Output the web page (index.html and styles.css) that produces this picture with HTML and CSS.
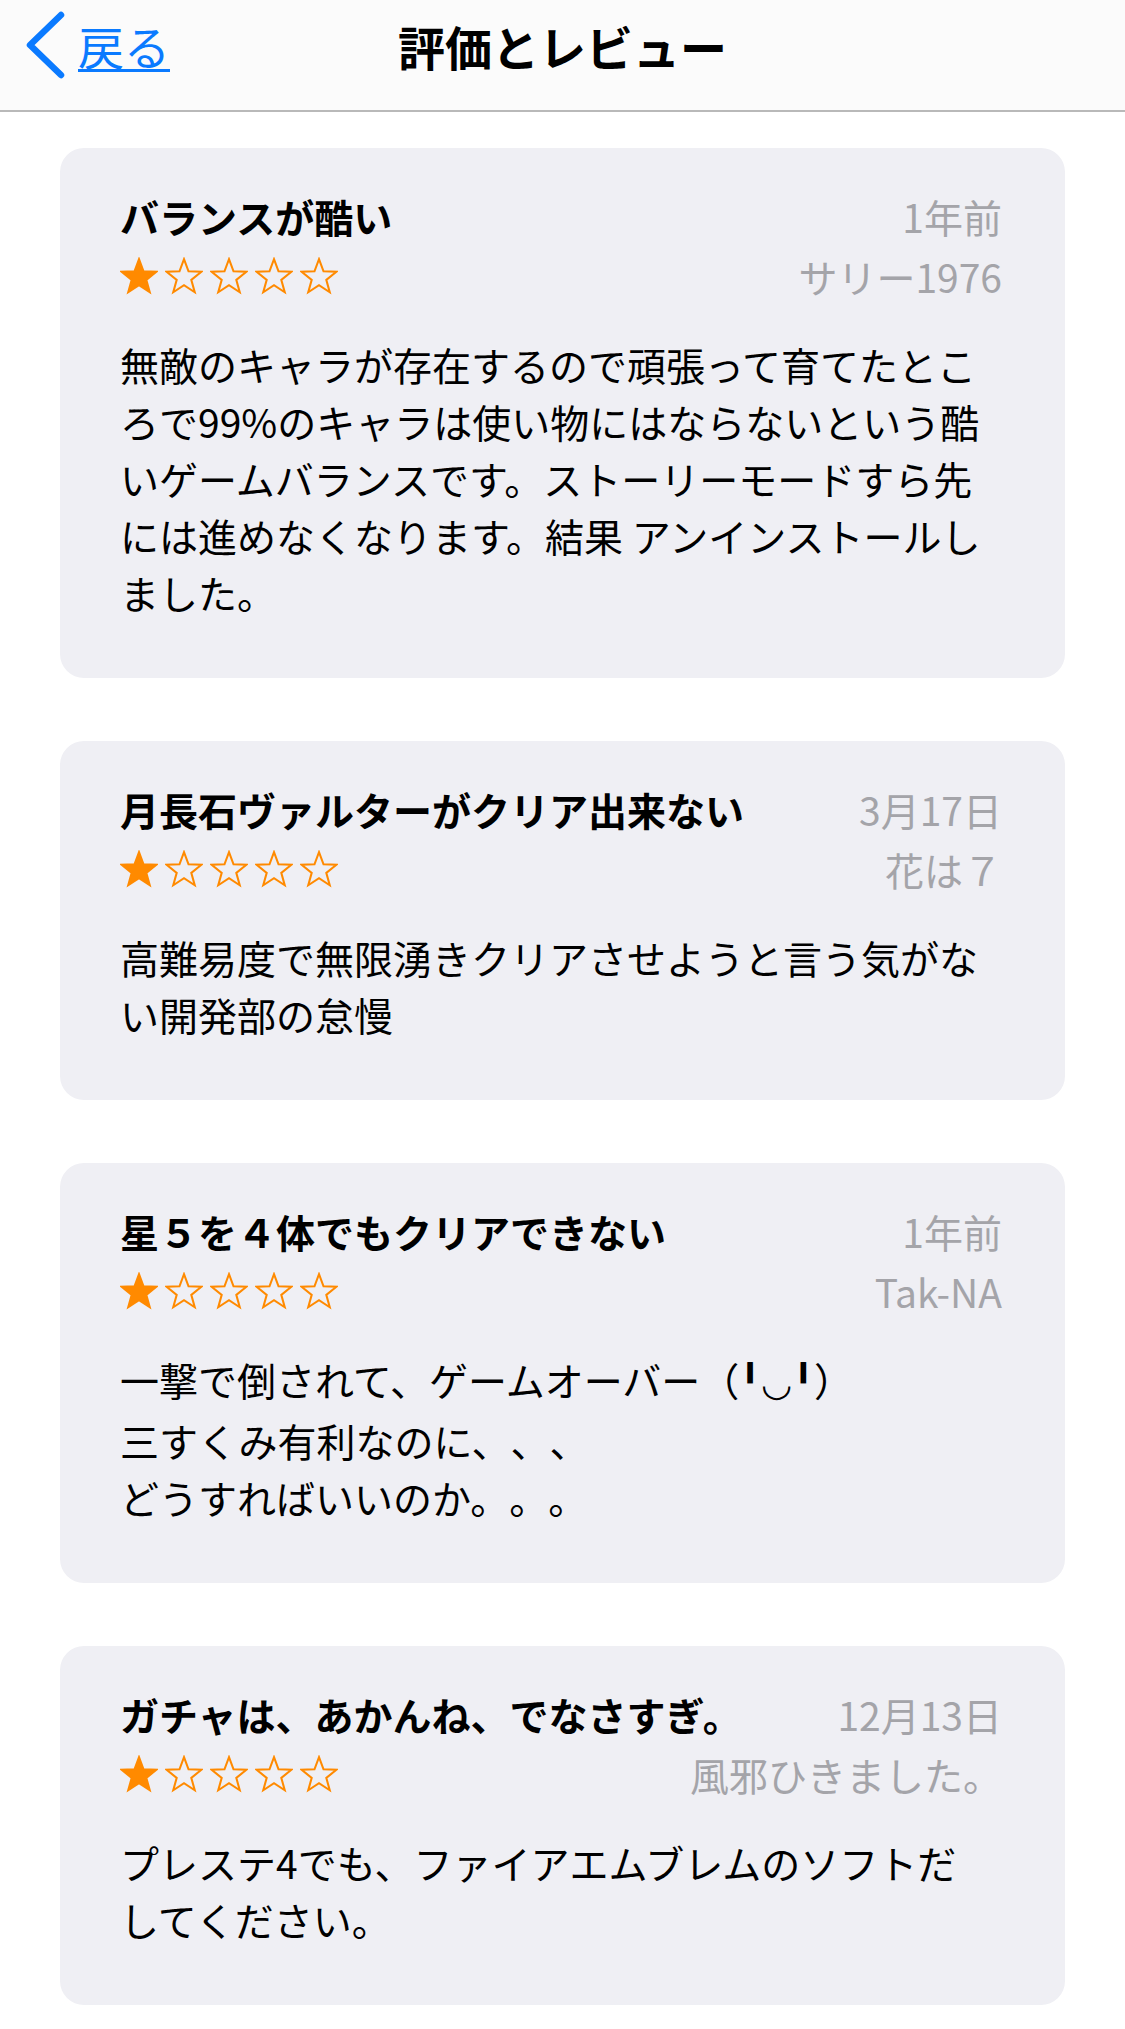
FILE: index.html
```html
<!DOCTYPE html>
<html lang="ja">
<head>
<meta charset="utf-8">
<title>評価とレビュー</title>
<link rel="stylesheet" href="styles.css">
</head>
<body>
<svg class="defs" width="0" height="0" aria-hidden="true">
  <symbol id="star" viewBox="-1 -1 26 26">
    <polygon points="12,0.5 15.09,8.75 23.89,9.14 16.99,14.62 19.35,23.11 12,18.25 4.65,23.11 7.01,14.62 0.11,9.14 8.91,8.75"/>
  </symbol>
</svg>

<header class="nav">
  <a class="nav-back" href="#">
    <svg class="nav-chevron" width="44" height="70" viewBox="0 0 44 70" aria-hidden="true">
      <polyline points="37,5 6,35 37,65" fill="none" stroke="currentColor" stroke-width="6.5" stroke-linecap="round" stroke-linejoin="round"/>
    </svg>
    <span class="nav-back-label">戻る</span>
  </a>
  <h1 class="nav-title">評価とレビュー</h1>
  <span class="nav-spacer"></span>
</header>

<main class="reviews">
  <article class="review">
    <div class="review-row">
      <h2 class="review-title">バランスが酷い</h2>
      <span class="review-date">1年前</span>
    </div>
    <div class="review-row">
      <div class="stars">
        <svg class="star star--on"><use href="#star"/></svg>
        <svg class="star"><use href="#star"/></svg>
        <svg class="star"><use href="#star"/></svg>
        <svg class="star"><use href="#star"/></svg>
        <svg class="star"><use href="#star"/></svg>
      </div>
      <span class="review-author">サリー1976</span>
    </div>
    <p class="review-body">無敵のキャラが存在するので頑張って育てたとこ<br>ろで99%のキャラは使い物にはならないという酷<br>いゲームバランスです。ストーリーモードすら先<br>には進めなくなります。結果 アンインストールし<br>ました。</p>
  </article>

  <article class="review">
    <div class="review-row">
      <h2 class="review-title">月長石ヴァルターがクリア出来ない</h2>
      <span class="review-date">3月17日</span>
    </div>
    <div class="review-row">
      <div class="stars">
        <svg class="star star--on"><use href="#star"/></svg>
        <svg class="star"><use href="#star"/></svg>
        <svg class="star"><use href="#star"/></svg>
        <svg class="star"><use href="#star"/></svg>
        <svg class="star"><use href="#star"/></svg>
      </div>
      <span class="review-author">花は７</span>
    </div>
    <p class="review-body">高難易度で無限湧きクリアさせようと言う気がな<br>い開発部の怠慢</p>
  </article>

  <article class="review">
    <div class="review-row">
      <h2 class="review-title">星５を４体でもクリアできない</h2>
      <span class="review-date">1年前</span>
    </div>
    <div class="review-row">
      <div class="stars">
        <svg class="star star--on"><use href="#star"/></svg>
        <svg class="star"><use href="#star"/></svg>
        <svg class="star"><use href="#star"/></svg>
        <svg class="star"><use href="#star"/></svg>
        <svg class="star"><use href="#star"/></svg>
      </div>
      <span class="review-author">Tak-NA</span>
    </div>
    <p class="review-body">一撃で倒されて、ゲームオーバー（<span class="kao">╹◡╹</span>）<br>三すくみ有利なのに、、、<br>どうすればいいのか。。。</p>
  </article>

  <article class="review">
    <div class="review-row">
      <h2 class="review-title">ガチャは、あかんね、でなさすぎ。</h2>
      <span class="review-date">12月13日</span>
    </div>
    <div class="review-row">
      <div class="stars">
        <svg class="star star--on"><use href="#star"/></svg>
        <svg class="star"><use href="#star"/></svg>
        <svg class="star"><use href="#star"/></svg>
        <svg class="star"><use href="#star"/></svg>
        <svg class="star"><use href="#star"/></svg>
      </div>
      <span class="review-author">風邪ひきました。</span>
    </div>
    <p class="review-body">プレステ4でも、ファイアエムブレムのソフトだ<br>してください。</p>
  </article>
</main>
</body>
</html>
```

FILE: styles.css
```css
html, body {
  margin: 0;
  padding: 0;
  background: #ffffff;
}

body {
  font-family: "Noto Sans CJK JP", "Noto Sans", sans-serif;
  color: #000000;
  text-spacing-trim: space-all;
}

.defs {
  position: absolute;
  width: 0;
  height: 0;
  overflow: hidden;
}

/* Navigation bar */
.nav {
  height: 90px;
  padding-bottom: 20px;
  display: grid;
  grid-template-columns: 1fr auto 1fr;
  align-items: center;
  background: #fbfbfb;
  border-bottom: 2px solid #b9b9b9;
}

.nav-back {
  display: flex;
  align-items: center;
  gap: 10px;
  padding-left: 24px;
  color: #0a7aff;
  text-decoration: none;
  justify-self: start;
}

.nav-chevron {
  display: block;
  flex: none;
}

.nav-back-label {
  font-size: 46px;
  line-height: 1;
  text-decoration: underline;
  text-decoration-thickness: 3px;
  text-underline-offset: 4px;
}

.nav-title {
  margin: 0;
  font-size: 47px;
  font-weight: 700;
  line-height: 1;
  white-space: nowrap;
}

/* Reviews */
.reviews {
  display: flex;
  flex-direction: column;
  gap: 63px;
  padding: 36px 60px 0;
}

.review {
  background: #efeff4;
  border-radius: 24px;
  padding: 38px 63px 57px 60px;
}

.review-row {
  display: flex;
  align-items: center;
  justify-content: space-between;
  gap: 20px;
  height: 60px;
}

.review-title {
  margin: 0;
  font-size: 39px;
  font-weight: 700;
  line-height: 60px;
  white-space: nowrap;
}

.review-date,
.review-author {
  font-size: 39px;
  line-height: 60px;
  color: #a4a4a9;
  text-align: right;
  white-space: nowrap;
}

.stars {
  display: flex;
  gap: 7px;
  align-items: center;
}

.star {
  width: 38px;
  height: 38px;
  fill: none;
  stroke: #ff8a00;
  stroke-width: 1.4;
  stroke-linejoin: miter;
}

.star--on {
  fill: #ff8a00;
}

.review-body {
  margin: 30px 0 0;
  font-size: 39px;
  line-height: 57px;
}

.kao {
  font-family: "DejaVu Sans", sans-serif;
  font-size: 36px;
}
```
